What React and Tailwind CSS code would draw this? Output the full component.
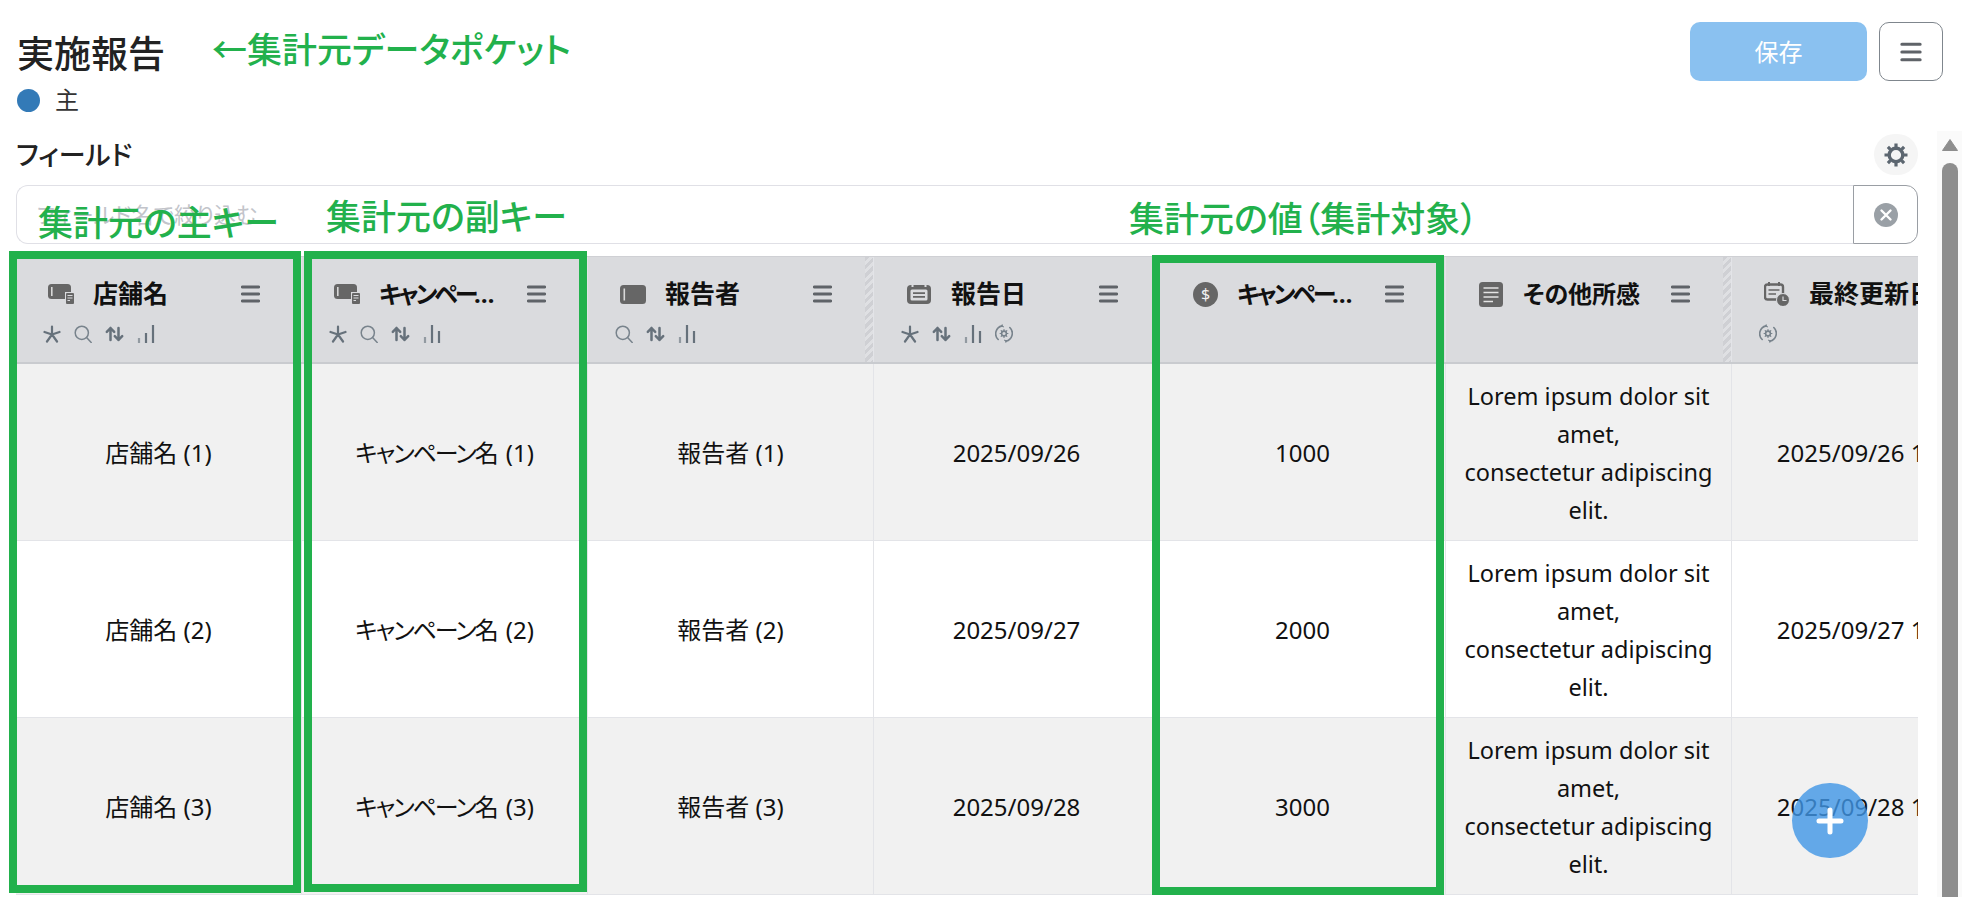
import React from "react";

const G = "#66717b";
const D = "#666666";

const Star = () => (
  <svg width="18" height="18" viewBox="0 0 18 18" fill="none" stroke={G} strokeWidth="2.2" strokeLinecap="round">
    <path d="M9 1.5V9.5M9 9.5L1.5 7M9 9.5L16.5 7M9 9.5L4 16.5M9 9.5L14 16.5" />
  </svg>
);
const Search = () => (
  <svg width="18" height="18" viewBox="0 0 18 18" fill="none" stroke="#78838c" strokeWidth="1.5" strokeLinecap="round">
    <circle cx="7.8" cy="7.8" r="6.6" />
    <path d="M12.6 12.6L17.2 17.4" />
  </svg>
);
const Sort = () => (
  <svg width="19" height="18" viewBox="0 0 19 18" fill="none" stroke={G} strokeWidth="2.5" strokeLinecap="round" strokeLinejoin="round">
    <path d="M5.5 15V3M1.8 6.8L5.5 3L9.2 6.8" />
    <path d="M13.5 3V15M9.8 11.2L13.5 15L17.2 11.2" />
  </svg>
);
const BarsUp = () => (
  <svg width="18" height="19" viewBox="0 0 18 19" fill="none" strokeWidth="2.2">
    <path d="M2 19V14" stroke="#929aa1" />
    <path d="M9 19V9" stroke={G} />
    <path d="M16 19V1" stroke={G} />
  </svg>
);
const BarsMid = () => (
  <svg width="18" height="19" viewBox="0 0 18 19" fill="none" strokeWidth="2.2">
    <path d="M2 19V13" stroke="#929aa1" />
    <path d="M9 19V1" stroke={G} />
    <path d="M16 19V7" stroke={G} />
  </svg>
);
const Sync = () => (
  <svg width="18" height="19" viewBox="0 0 18 19" fill="none" stroke="#78838c" strokeWidth="1.6" strokeLinecap="round">
    <path d="M3.2 15.5A8 8 0 0 1 7 1.9" />
    <path d="M14.8 3.5A8 8 0 0 1 11 17.1" />
    <path d="M7.2 0.8L7 2.2L8.4 2.8M10.8 18.2L11 16.8L9.6 16.2" strokeWidth="1.2" />
    <circle cx="9" cy="9.5" r="2.4" strokeWidth="1.6" />
    <path d="M9 5.6V6.8M9 12.2V13.4M5.1 9.5H6.3M11.7 9.5H12.9M6.2 6.7L7.1 7.6M10.9 11.4L11.8 12.3M11.8 6.7L10.9 7.6M7.1 11.4L6.2 12.3" strokeWidth="1.2" />
  </svg>
);
const Menu = ({ w = 19, h = 18, color = "#5f6368" }) => (
  <svg width={w} height={h} viewBox="0 0 19 18" fill="none" stroke={color} strokeWidth="2.8" strokeLinecap="round">
    <path d="M1.3 2H17.7M1.3 9H17.7M1.3 16H17.7" />
  </svg>
);

const KeyIcon = () => (
  <svg width="26" height="20" viewBox="0 0 26 20">
    <rect x="0" y="0" width="23" height="15" rx="3.5" fill={D} />
    <rect x="3" y="3" width="1.6" height="9" fill="#d8d8d8" />
    <rect x="17" y="8" width="10" height="13" fill="#dadbde" />
    <rect x="18" y="9" width="8" height="11" rx="1" fill={D} />
    <path d="M19.5 11.5H24.5M19.5 14H24.5M19.5 16.5H22" stroke="#dadbde" strokeWidth="1" />
  </svg>
);
const PlainIcon = () => (
  <svg width="26" height="19" viewBox="0 0 26 19">
    <rect x="0" y="0" width="26" height="19" rx="3.5" fill={D} />
    <rect x="3.5" y="3.5" width="1.6" height="12" fill="#d8d8d8" />
  </svg>
);
const CalIcon = () => (
  <svg width="24" height="20" viewBox="0 0 24 20">
    <rect x="0" y="1" width="24" height="19" rx="4" fill={D} />
    <rect x="3.5" y="5.5" width="17" height="11" rx="1.5" fill="#dadbde" />
    <rect x="4.5" y="0" width="2" height="3" fill="#dadbde" />
    <rect x="17.5" y="0" width="2" height="3" fill="#dadbde" />
    <path d="M6 9.2H18M6 12.8H18" stroke={D} strokeWidth="1.7" />
  </svg>
);
const DollarIcon = () => (
  <svg width="25" height="25" viewBox="0 0 25 25">
    <circle cx="12.5" cy="12.5" r="12.5" fill={D} />
    <text x="12.5" y="18" textAnchor="middle" fontSize="16" fontWeight="400" fill="#f2f2f2" fontFamily="'Noto Sans', sans-serif">$</text>
  </svg>
);
const DocIcon = () => (
  <svg width="24" height="25" viewBox="0 0 24 25">
    <rect x="0" y="0" width="24" height="25" rx="3.5" fill={D} />
    <path d="M4.5 6H19.5M4.5 10.5H19.5M4.5 15H19.5M4.5 19.5H14" stroke="#e4e4e4" strokeWidth="1.5" />
  </svg>
);
const CalClockIcon = () => (
  <svg width="26" height="24" viewBox="0 0 26 24">
    <rect x="1" y="2.5" width="18" height="15" rx="2.5" fill="none" stroke={D} strokeWidth="2.4" />
    <rect x="4" y="0" width="2" height="4" fill={D} />
    <rect x="14" y="0" width="2" height="4" fill={D} />
    <path d="M4.5 8H15.5M4.5 12H12" stroke={D} strokeWidth="1.6" />
    <circle cx="19" cy="18" r="6.5" fill={D} stroke="#dadbde" strokeWidth="1" />
    <path d="M19 14.5V18.5H22.5" stroke="#dadbde" strokeWidth="1.2" fill="none" />
  </svg>
);
const Gear = () => (
  <svg width="26" height="26" viewBox="0 0 26 26" fill="none" stroke="#5c6670">
    <circle cx="13" cy="13" r="6.8" strokeWidth="3.4" />
    <path d="M13 1.5V5M13 21V24.5M1.5 13H5M21 13H24.5M4.9 4.9L7.3 7.3M18.7 18.7L21.1 21.1M21.1 4.9L18.7 7.3M7.3 18.7L4.9 21.1" strokeWidth="3.2" />
  </svg>
);
const ClearIcon = () => (
  <svg width="24" height="24" viewBox="0 0 24 24" fill="none">
    <circle cx="12" cy="12" r="12" fill="#9aa0a6" />
    <path d="M7.5 7.5L16.5 16.5M16.5 7.5L7.5 16.5" stroke="#fff" strokeWidth="2.4" strokeLinecap="round" />
  </svg>
);

const columns = [
  { icon: <KeyIcon />, label: "店舗名", tools: [<Star />, <Search />, <Sort />, <BarsUp />], cell: (i) => `店舗名 (${i})` },
  {
    icon: <KeyIcon />,
    label: "キャンペーン名",
    kana: true,
    tools: [<Star />, <Search />, <Sort />, <BarsMid />],
    cell: (i) => (
      <>
        <span className="tracking-[-2px]">キャンペーン名</span>
        <span className="ml-[9px]">{`(${i})`}</span>
      </>
    ),
  },
  { icon: <PlainIcon />, label: "報告者", tools: [<Search />, <Sort />, <BarsMid />], cell: (i) => `報告者 (${i})`, hatch: true },
  { icon: <CalIcon />, label: "報告日", tools: [<Star />, <Sort />, <BarsMid />, <Sync />], cell: (i) => `2025/09/${25 + i}` },
  { icon: <DollarIcon />, label: "キャンペーン予算", kana: true, tools: [], cell: (i) => `${i}000` },
  { icon: <DocIcon />, label: "その他所感", narrow: true, tools: [], lorem: true, hatch: true },
  { icon: <CalClockIcon />, label: "最終更新日時", tools: [<Sync />], cell: (i) => `2025/09/${25 + i} 10:00`, noMenu: true },
];

function HeadCell({ col }) {
  return (
    <div className="relative w-[286px] shrink-0 overflow-hidden border-r border-[#e3e4e8] pt-[20px]">
      <div className="flex h-[34px] items-center pl-[32px] pr-[41px]">
        <span className="flex w-[26px] shrink-0 justify-center">{col.icon}</span>
        <span
          className={`ml-[19px] font-bold text-[#111] ${col.kana ? "max-w-[122px] truncate text-[24px] tracking-[-3px]" : ""} ${
            col.narrow ? "whitespace-nowrap text-[24px]" : ""
          } ${!col.kana && !col.narrow ? "whitespace-nowrap text-[25px]" : ""}`}
        >
          {col.label}
        </span>
        {!col.noMenu && (
          <span className="ml-auto shrink-0">
            <Menu />
          </span>
        )}
      </div>
      <div className="mt-[13px] flex h-[19px] items-center gap-[13px] pl-[27px]">
        {col.tools.map((t, i) => (
          <span key={i} className="flex">
            {t}
          </span>
        ))}
      </div>
      {col.hatch && (
        <div className="absolute right-0 top-0 h-full w-[8px] bg-[repeating-linear-gradient(135deg,#cfd0d4_0px,#cfd0d4_3px,#dfe0e3_3px,#dfe0e3_6px)]" />
      )}
    </div>
  );
}

function Cell({ col, i }) {
  return (
    <div className="flex w-[286px] shrink-0 items-center justify-center overflow-hidden whitespace-nowrap border-r border-[#e3e4e8] pt-[2px] text-center text-[24px] leading-[38px] text-[#111]">
      {col.lorem ? (
        <span className="whitespace-normal text-[23.5px]">
          Lorem ipsum dolor sit amet,
          <br />
          consectetur adipiscing elit.
        </span>
      ) : (
        <span>{col.cell(i)}</span>
      )}
    </div>
  );
}

function Row({ i }) {
  return (
    <div className={`flex h-[177px] border-b border-[#e3e4e8] ${i % 2 === 1 ? "bg-[#f1f1f1]" : "bg-white"}`}>
      {columns.map((c, k) => (
        <Cell key={k} col={c} i={i} />
      ))}
    </div>
  );
}

const annotation = "absolute whitespace-nowrap text-[35px] font-medium leading-[44px] text-[#22b14c]";
const box = "absolute border-8 border-[#22b14c]";

export default function App() {
  return (
    <div className="relative h-[897px] w-[1965px] overflow-hidden bg-white font-['Noto_Sans','Noto_Sans_CJK_JP',sans-serif] [font-feature-settings:'palt']">
      <header className="flex h-[131px] items-start justify-between pl-[17px] pr-[22px] pt-[22px]">
        <div>
          <h1 className="mt-[8px] text-[37px] font-medium leading-[48px] text-[#222]">実施報告</h1>
          <div className="mt-[10px] flex items-center gap-[15px]">
            <span className="h-[23px] w-[23px] rounded-full bg-[#337ab7]" />
            <span className="text-[24px] leading-[24px] text-[#333]">主</span>
          </div>
        </div>
        <div className="flex gap-[12px]">
          <button className="h-[59px] w-[177px] rounded-[10px] bg-[#8ac1f0] text-[24px] text-white">保存</button>
          <button className="flex h-[59px] w-[64px] items-center justify-center rounded-[10px] border border-[#7f868d]">
            <Menu w={22} h={20} />
          </button>
        </div>
      </header>

      <main className="flex h-[766px]">
        <div className="ml-[16px] w-[1902px] shrink-0 overflow-hidden">
          <div className="flex h-[54px] items-start justify-between">
            <span className="mt-[9px] text-[27px] font-medium leading-[30px] text-[#222]">フィールド</span>
            <span className="mt-[3px] flex h-[41px] w-[44px] items-center justify-center rounded-full bg-[#f5f5f5]">
              <Gear />
            </span>
          </div>
          <div className="flex h-[59px]">
            <div className="flex flex-1 items-center rounded-l-[12px] border border-r-0 border-[#e0e0e6] pl-[20px] text-[22px] text-[#c2c4ca]">
              フィールド名で絞り込む
            </div>
            <div className="flex w-[65px] items-center justify-center rounded-r-[12px] border border-[#9a9ea4]">
              <ClearIcon />
            </div>
          </div>
          <div className="mt-[12px]">
            <div className="flex h-[108px] border-b-2 border-t border-b-[#c9cbcf] border-t-[#cfd0d4] bg-[#dadbde]">
              {columns.map((c, k) => (
                <HeadCell key={k} col={c} />
              ))}
            </div>
            {[1, 2, 3].map((i) => (
              <Row key={i} i={i} />
            ))}
          </div>
        </div>
        <div className="ml-[19px] flex h-full w-[25px] shrink-0 flex-col items-center bg-[#fafafa] pt-[8px]">
          <svg width="16" height="12" viewBox="0 0 16 12" fill="#8e8e8e">
            <path d="M8 0.5L15.5 11.5H0.5Z" stroke="#8e8e8e" strokeLinejoin="round" />
          </svg>
          <div className="mt-[12px] w-[16px] flex-1 rounded-t-full bg-[#8e8e8e]" />
        </div>
      </main>

      {/* Green annotations laid over the screenshot */}
      <div className={`${annotation} left-[212px] top-[28px] text-[34px]`}>←集計元データポケット</div>
      <div className={`${annotation} left-[38px] top-[201px]`}>集計元の主キー</div>
      <div className={`${annotation} left-[326px] top-[195px]`}>集計元の副キー</div>
      <div className={`${annotation} left-[1129px] top-[197px]`}>集計元の値（集計対象）</div>
      <div className={`${box} left-[9px] top-[251px] h-[642px] w-[292px]`} />
      <div className={`${box} left-[304px] top-[251px] h-[641px] w-[283px]`} />
      <div className={`${box} left-[1152px] top-[255px] h-[640px] w-[292px]`} />

      <button className="absolute left-[1792px] top-[783px] flex h-[75px] w-[76px] items-center justify-center rounded-full bg-[#4096e6]/80">
        <svg width="28" height="28" viewBox="0 0 28 28" stroke="#fff" strokeWidth="5" strokeLinecap="round">
          <path d="M14 3V25M3 14H25" />
        </svg>
      </button>
    </div>
  );
}
